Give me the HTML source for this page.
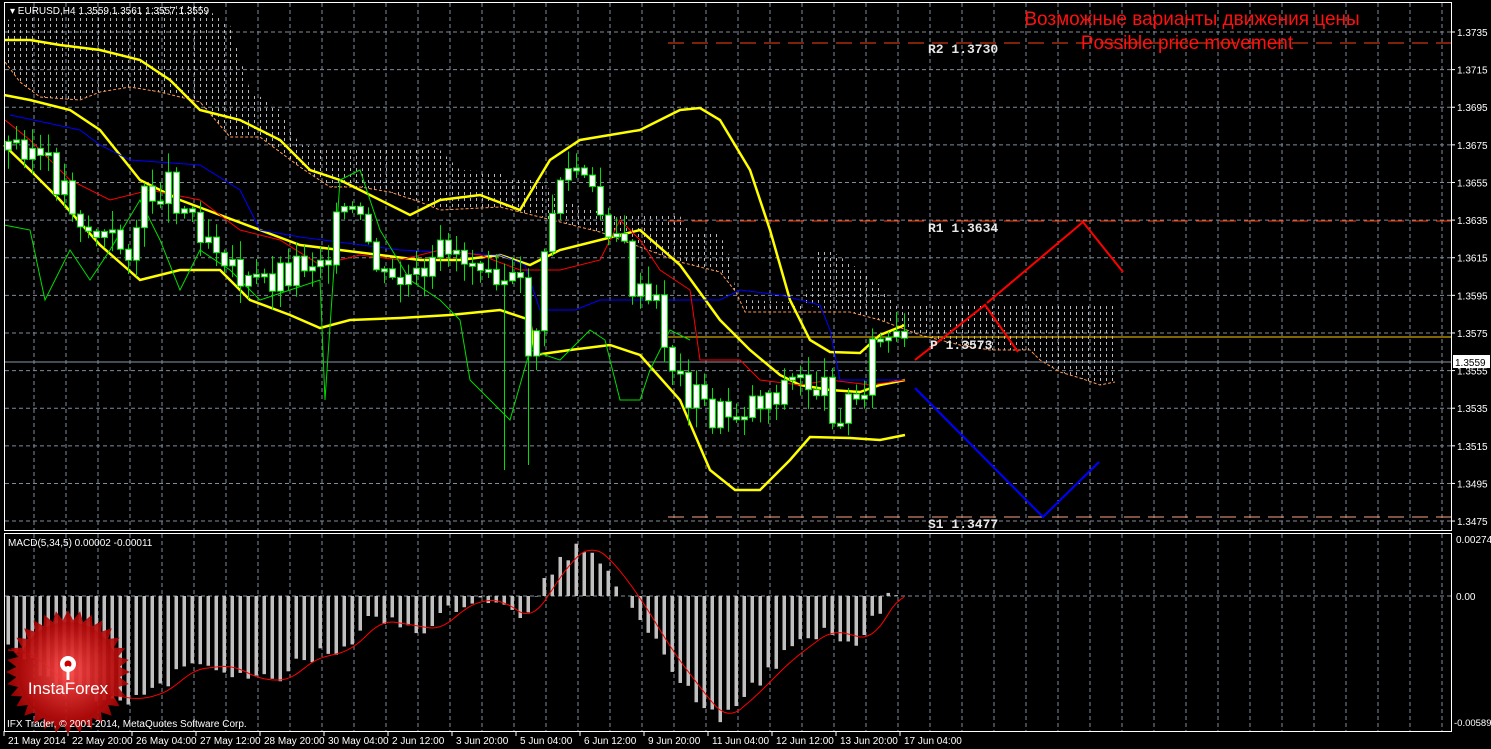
<!DOCTYPE html>
<html><head><meta charset="utf-8"><style>
html,body{margin:0;padding:0;background:#000;width:1491px;height:749px;overflow:hidden}
svg{display:block}
text{font-family:"Liberation Sans",sans-serif}
.mono text{font-family:"Liberation Mono",monospace}
</style></head><body>
<svg id="s" width="1491" height="749" xmlns="http://www.w3.org/2000/svg">
<defs>
<pattern id="hatch" width="6" height="6" patternUnits="userSpaceOnUse">
<rect x="2" y="0" width="1" height="3" fill="#d8d8d8"/>
</pattern>
<radialGradient id="rg" cx="50%" cy="50%" r="50%">
<stop offset="0" stop-color="#ff4a4a"/><stop offset="1" stop-color="#a80000"/>
</radialGradient>
</defs>
<rect width="1491" height="749" fill="#000"/>
<g id="grid" stroke="#7f8b99" stroke-width="1" stroke-dasharray="4,3"></g>
<polygon fill="url(#hatch)" opacity="0.85" points="200,4 215,15 230,25 250,90 280,110 300,145 330,148 400,148 440,150 460,170 500,172 510,180 540,180 560,200 600,212 620,216 680,216 690,232 720,234 730,258 736,292 720,272 680,262 640,247 600,232 540,217 500,207 440,210 420,202 390,192 360,187 330,187 300,167 280,152 260,137 230,137 200,102 160,92 130,87 100,92 80,100 40,97 20,82 5,62 5,20 100,12"/>
<polygon fill="url(#hatch)" opacity="0.85" points="818,252 830,250 860,270 880,285 895,305 1115,305 1115,382 1100,385 1080,378 1060,372 1040,360 1030,350 990,350 960,345 920,335 880,320 850,312 820,308 790,302 745,300 745,312 800,312"/>
<polyline fill="none" stroke="#ff9a50" stroke-width="1" stroke-dasharray="3,2" points="5,62 20,82 40,97 80,100 100,92 130,87 160,92 200,102 230,137 260,137 280,152 300,167 330,187 360,187 390,192 420,202 440,210 500,207 540,217 600,232 640,247 680,262 720,272 736,292 745,312 800,312 850,312 880,320 920,335 960,345 990,350 1030,350 1040,360 1060,372 1080,378 1100,385 1115,382"/>
<line x1="668" y1="43" x2="1451" y2="43" stroke="#ff4010" stroke-dasharray="16,8"/>
<line x1="668" y1="221" x2="1451" y2="221" stroke="#ff4010" stroke-dasharray="16,8"/>
<line x1="668" y1="337" x2="1451" y2="337" stroke="#ffcc00"/>
<line x1="668" y1="517" x2="1451" y2="517" stroke="#ffa080" stroke-dasharray="16,8"/>
<line x1="4" y1="362" x2="1451" y2="362" stroke="#8a96a4"/>
<g id="ind" fill="none"></g>
<g id="cand"></g>
<g id="macd"></g>
<polyline fill="none" stroke="#ff0000" stroke-width="2" points="915,360 985,305 1018,352"/>
<polyline fill="none" stroke="#ff0000" stroke-width="2" points="987,303 1083,222 1123,272"/>
<polyline fill="none" stroke="#0000ff" stroke-width="2" points="915,388 1043,517 1099,462"/>
<rect x="4.5" y="2.5" width="1447" height="528" fill="none" stroke="#fff"/>
<rect x="4.5" y="533.5" width="1447" height="198" fill="none" stroke="#fff"/>
<text x="10" y="14" fill="#fff" font-size="10">▾ EURUSD,H4  1.3559 1.3561 1.3557 1.3559</text>
<text x="8" y="546" fill="#fff" font-size="10">MACD(5,34,5) 0.00002 -0.00011</text>
<text x="1192" y="25" fill="#ff1010" font-size="19" text-anchor="middle">Возможные варианты движения цены</text>
<text x="1187" y="49" fill="#ff1010" font-size="19" text-anchor="middle">Possible price movement</text>
<g class="mono" font-size="13" font-weight="bold" fill="#e8e8e8">
<text x="928" y="53">R2 1.3730</text>
<text x="928" y="232">R1 1.3634</text>
<text x="930" y="349">P 1.3573</text>
<text x="928" y="528">S1 1.3477</text>
</g>
<g id="axis" fill="#fff" font-size="10"></g>
<rect x="1453" y="355" width="37" height="13" fill="#fff"/>
<text x="1455" y="366" fill="#000" font-size="10">1.3559</text>
<g transform="translate(68,672)">
<polygon id="star" fill="url(#rg)" opacity="0.9"/>
<circle r="50" fill="url(#rg)" opacity="0.4"/>
<g fill="#fff"><circle cx="0" cy="-8" r="8"/><circle cx="0" cy="-8" r="3.5" fill="#c00"/><rect x="-1.5" y="-6" width="3" height="14"/></g>
<text x="0" y="22" fill="#fff" font-size="17" text-anchor="middle">InstaForex</text>
</g>
<text x="7" y="727" fill="#fff" font-size="10">IFX Trader, © 2001-2014, MetaQuotes Software Corp.</text>
</svg>
<script>
(function(){
var NS="http://www.w3.org/2000/svg";
function el(p,t,a,txt){var e=document.createElementNS(NS,t);for(var k in a)e.setAttribute(k,a[k]);if(txt)e.textContent=txt;document.getElementById(p).appendChild(e);return e;}
for(var x=34;x<1451;x+=32){el('grid','line',{x1:x,y1:3,x2:x,y2:530});el('grid','line',{x1:x,y1:534,x2:x,y2:731});}
var prices=["1.3735","1.3715","1.3695","1.3675","1.3655","1.3635","1.3615","1.3595","1.3575","1.3555","1.3535","1.3515","1.3495","1.3475"];
for(var i=0;i<14;i++){var y=32+i*37.62;el('grid','line',{x1:5,y1:y,x2:1451,y2:y});el('axis','line',{x1:1451,y1:y,x2:1455,y2:y,stroke:'#fff'});el('axis','text',{x:1457,y:y+4},prices[i]);}
el('grid','line',{x1:5,y1:596,x2:1451,y2:596});
el('axis','text',{x:1456,y:543},"0.00274");el('axis','text',{x:1456,y:600},"0.00");el('axis','text',{x:1454,y:726,'font-size':9.5},"-0.00589");
var tl=["21 May 2014","22 May 20:00","26 May 04:00","27 May 12:00","28 May 20:00","30 May 04:00","2 Jun 12:00","3 Jun 20:00","5 Jun 04:00","6 Jun 12:00","9 Jun 20:00","11 Jun 04:00","12 Jun 12:00","13 Jun 20:00","17 Jun 04:00"];
for(var i=0;i<tl.length;i++){var x=2+i*64;el('axis','line',{x1:x+2,y1:731,x2:x+2,y2:736,stroke:'#fff'});el('axis','text',{x:x+6,y:744},tl[i]);}
function pl(c,w,pts){el('ind','polyline',{points:pts,stroke:c,'stroke-width':w});}
pl('#ffff00',2.5,"4,40 30,40 60,45 100,50 140,60 170,80 200,110 240,120 280,140 310,170 340,180 380,200 410,215 440,200 480,195 520,210 550,160 580,140 640,130 680,110 700,108 720,120 750,170 770,230 790,300 810,340 830,352 860,353 880,335 905,325");
pl('#ffff00',2.5,"4,95 30,100 70,110 100,130 140,180 180,200 220,215 260,230 300,245 340,250 380,255 420,260 460,260 500,255 530,265 560,250 600,240 640,230 680,265 720,320 750,350 780,375 800,385 830,390 860,392 880,385 905,380");
pl('#ffff00',2.5,"4,145 30,170 60,200 100,245 140,280 180,270 220,270 250,300 290,315 320,328 350,320 400,318 450,315 500,310 530,320 535,355 570,350 610,345 640,355 680,400 710,470 735,490 760,490 790,460 810,437 850,438 880,440 905,435");
pl('#0000ff',1,"10,115 80,130 100,145 130,160 200,165 240,190 260,230 300,237 400,250 500,255 525,265 540,310 575,310 600,300 720,300 740,290 780,295 820,305 830,330 840,380 870,380 905,380");
pl('#ff0000',1,"5,120 30,140 70,180 110,200 150,190 200,200 240,230 280,240 320,265 360,255 400,260 440,250 480,255 520,270 560,270 600,260 620,220 640,240 660,270 690,290 700,360 740,360 760,380 800,385 830,380 870,385 905,380");
pl('#00dd00',1,"4,225 30,230 45,300 70,250 90,280 110,250 140,200 160,240 180,290 200,250 230,270 260,300 290,290 320,280 325,400 340,180 360,170 380,230 410,280 440,300 460,320 470,380 490,400 510,420 530,350 560,360 590,330 605,340 620,400 640,400 650,370 670,330 690,340");
var path=[[8,150],[30,140],[50,170],[70,190],[90,230],[110,240],[130,250],[150,200],[170,180],[190,210],[210,230],[230,250],[250,290],[270,280],[290,270],[310,260],[330,250],[350,210],[370,240],[390,290],[410,280],[430,290],[450,240],[470,260],[490,250],[510,280],[528,300],[534,370],[545,290],[560,180],[580,170],[600,210],[620,230],[640,300],[660,310],[680,380],[700,400],[720,420],[740,410],[760,400],[780,390],[800,380],[820,385],[840,410],[860,400],[880,340],[904,350]];
function py(x){for(var i=1;i<path.length;i++)if(x<=path[i][0]){var a=path[i-1],b=path[i];return a[1]+(b[1]-a[1])*(x-a[0])/(b[0]-a[0]);}return 350;}
var seed=3;function rnd(){seed=(seed*9301+49297)%233280;return seed/233280;}
var prev=py(8);
for(var x=8;x<=904;x+=8){var c=py(x+4)+(rnd()-0.5)*40,o=prev;var bt=Math.min(o,c),bb=Math.max(o,c);if(bb-bt<3)bb=bt+3;
var hi=bt-rnd()*18-2,lo=bb+rnd()*18+2;if(x==528){lo=465}if(x==504){lo=470}
el('cand','line',{x1:x+0.5,y1:hi,x2:x+0.5,y2:lo,stroke:'#00e000'});
el('cand','rect',{x:x-2.5,y:bt,width:6,height:bb-bt,fill:'#fff',stroke:'#00e000','stroke-width':1});prev=c;}
var mp=[[8,650],[30,660],[60,690],[100,695],[130,700],[160,690],[180,670],[220,665],[250,680],[280,680],[300,660],[340,650],[370,620],[400,625],[430,630],[450,610],[470,600],[490,600],[520,620],[540,590],[560,560],[580,545],[600,560],[630,600],[660,650],[690,690],[715,720],[740,700],[780,660],[820,630],[860,640],[885,600],[892,590],[900,596]];
function my(x){for(var i=1;i<mp.length;i++)if(x<=mp[i][0]){var a=mp[i-1],b=mp[i];return a[1]+(b[1]-a[1])*(x-a[0])/(b[0]-a[0]);}return 596;}
for(var x=8;x<=900;x+=8){var v=my(x)+(rnd()-0.5)*14;var t=Math.min(596,v),b=Math.max(596,v);el('macd','rect',{x:x-1.5,y:t,width:3.5,height:b-t,fill:'#c0c0c0'});}
var sp="";for(var x=8;x<=904;x+=4){var s=0,n=0;for(var k=0;k<=24;k+=4){s+=my(Math.max(8,x-k));n++;}sp+=x+","+(s/n)+" ";}
el('macd','polyline',{points:sp,fill:'none',stroke:'#ff0000','stroke-width':1});
var pts="";for(var i=0;i<64;i++){var r=i%2?52:62,a=i*Math.PI/32;pts+=(r*Math.cos(a)).toFixed(1)+","+(r*Math.sin(a)).toFixed(1)+" ";}
document.getElementById('star').setAttribute('points',pts);
})();
</script>
</body></html>
